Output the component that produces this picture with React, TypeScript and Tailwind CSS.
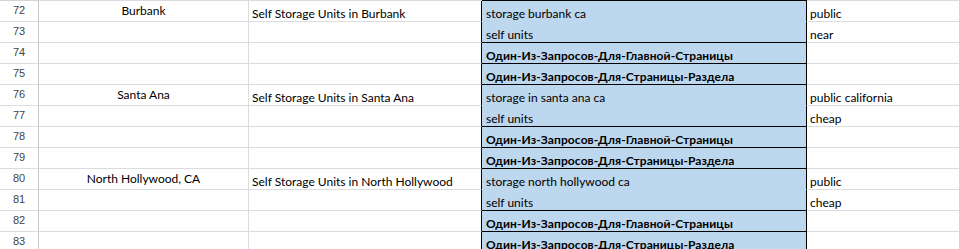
import React from 'react'

type Row = {
  n: number
  city?: string
  title?: string
  query?: string
  bold?: boolean
  tag?: string
  groupEnd?: boolean
}

const rows: Row[] = [
  { n: 72, city: 'Burbank', title: 'Self Storage Units in Burbank', query: 'storage burbank ca', tag: 'public' },
  { n: 73, query: 'self units', tag: 'near', groupEnd: true },
  { n: 74, query: 'Один-Из-Запросов-Для-Главной-Страницы', bold: true, groupEnd: true },
  { n: 75, query: 'Один-Из-Запросов-Для-Страницы-Раздела', bold: true, groupEnd: true },
  { n: 76, city: 'Santa Ana', title: 'Self Storage Units in Santa Ana', query: 'storage in santa ana ca', tag: 'public california' },
  { n: 77, query: 'self units', tag: 'cheap', groupEnd: true },
  { n: 78, query: 'Один-Из-Запросов-Для-Главной-Страницы', bold: true, groupEnd: true },
  { n: 79, query: 'Один-Из-Запросов-Для-Страницы-Раздела', bold: true, groupEnd: true },
  { n: 80, city: 'North Hollywood, CA', title: 'Self Storage Units in North Hollywood', query: 'storage north hollywood ca', tag: 'public' },
  { n: 81, query: 'self units', tag: 'cheap', groupEnd: true },
  { n: 82, query: 'Один-Из-Запросов-Для-Главной-Страницы', bold: true, groupEnd: true },
  { n: 83, query: 'Один-Из-Запросов-Для-Страницы-Раздела', bold: true, groupEnd: true },
]

export default function App() {
  return (
    <div className="w-[959px] h-[249px] overflow-hidden bg-white text-black font-['Lato','Noto_Sans',sans-serif] text-[12px]">
      {/* top gridline */}
      <div className="flex h-px">
        <div className="w-[39px] bg-[#d4d4d4]" />
        <div className="w-[210px] bg-[#dadcdd]" />
        <div className="w-[233px] bg-[#dadcdd]" />
        <div className="w-[325px] bg-black" />
        <div className="flex-1 bg-[#dadcdd]" />
      </div>

      {rows.map((r) => (
        <div key={r.n} className="flex h-[21px]">
          {/* Row header */}
          <div className="w-[39px] shrink-0 border-r border-b border-r-[#c6c6c6] border-b-[#dadcdd] flex items-center justify-center pb-[2px] text-[11px] text-[#444] font-['Liberation_Sans',sans-serif]">
            {r.n}
          </div>

          {/* City */}
          <div className="w-[210px] shrink-0 border-r border-b border-[#dadcdd] flex items-center justify-center pb-[1px] leading-[15px] whitespace-nowrap">
            {r.city}
          </div>

          {/* Title */}
          <div className="w-[233px] shrink-0 border-r border-b border-r-black border-b-[#dadcdd] flex items-end pl-[3px] leading-[15px] whitespace-nowrap">
            {r.title}
          </div>

          {/* Query (blue range) */}
          <div
            className={
              'w-[325px] shrink-0 bg-[#bdd7ee] border-r border-b border-r-black flex items-end pl-[4px] leading-[15px] whitespace-nowrap ' +
              (r.groupEnd ? 'border-b-black ' : 'border-b-transparent ') +
              (r.bold ? 'font-bold tracking-[0.1px]' : '')
            }
          >
            {r.query}
          </div>

          {/* Tag */}
          <div className="flex-1 border-b border-[#dadcdd] flex items-end pl-[3px] leading-[15px] whitespace-nowrap">
            {r.tag}
          </div>
        </div>
      ))}
    </div>
  )
}
